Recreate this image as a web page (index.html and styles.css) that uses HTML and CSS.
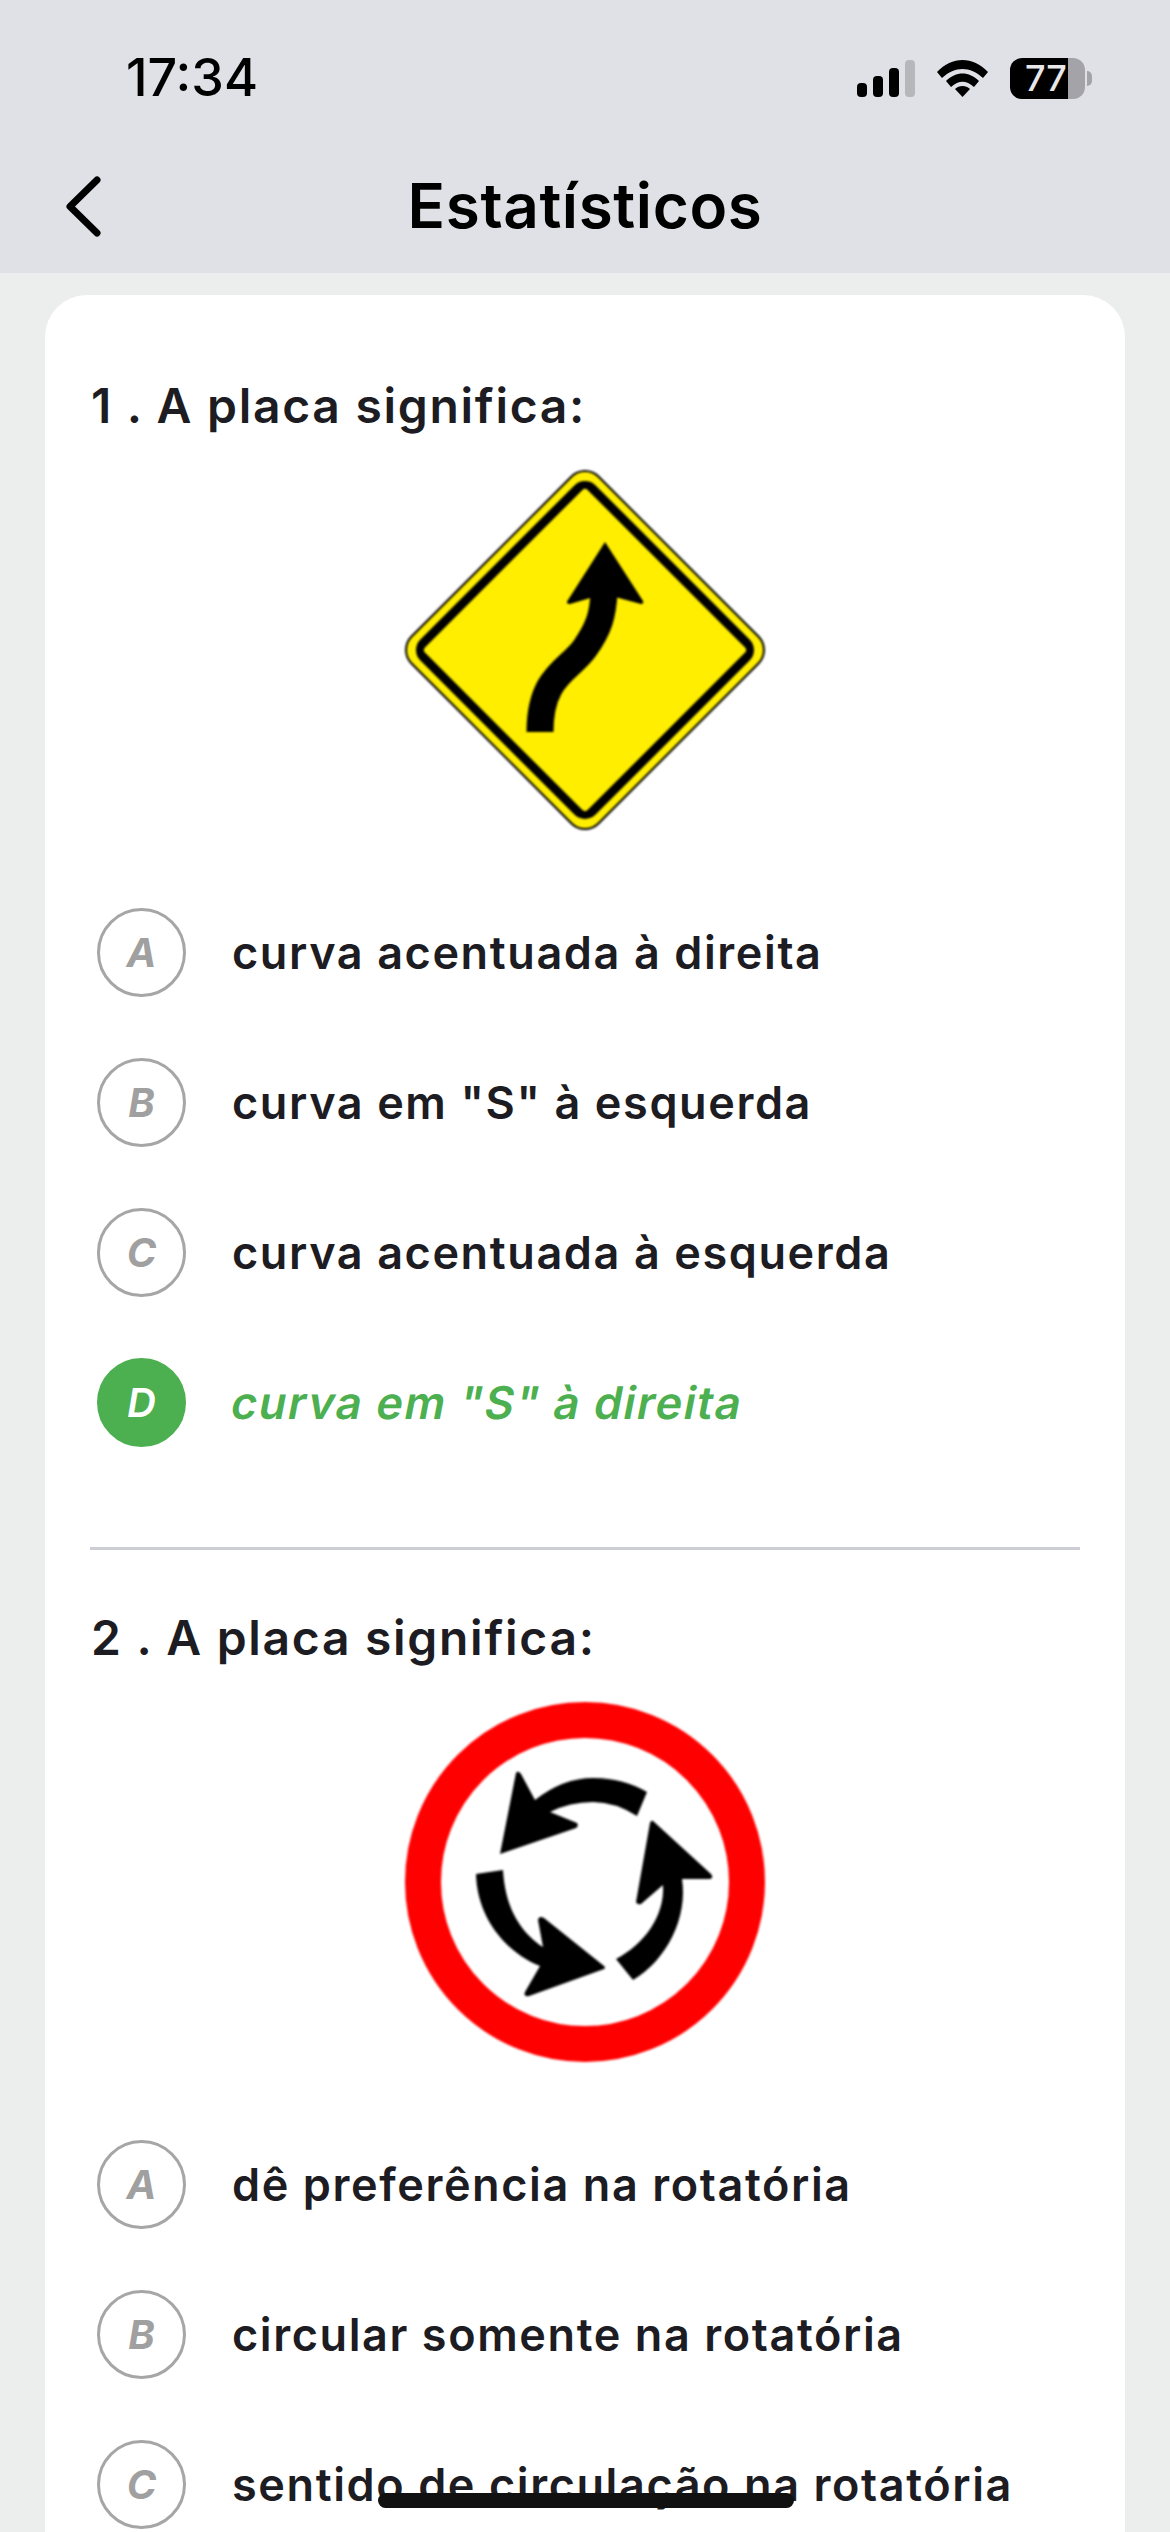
FILE: index.html
```html
<!DOCTYPE html>
<html lang="pt-BR">
<head>
    <meta charset="UTF-8">
    <meta name="viewport" content="width=device-width, initial-scale=1.0">
    <title>Estatísticos</title>
    <link rel="stylesheet" href="styles.css">
</head>
<body>
    <header class="top">
        <div class="status">
            <span class="time">17:34</span>
            <div class="status-icons">
                <svg class="signal" width="58" height="37" viewBox="0 0 58 37">
                    <rect x="0" y="23" width="10" height="14" rx="4" fill="#000"/>
                    <rect x="16" y="16" width="10" height="21" rx="4" fill="#000"/>
                    <rect x="32" y="8" width="10" height="29" rx="4" fill="#000"/>
                    <rect x="48" y="0" width="10" height="37" rx="4" fill="#b6b6bb"/>
                </svg>
                <svg class="wifi" width="51" height="37" viewBox="0 0 51 37">
                    <path d="M0 12 C15 -4 36 -4 51 12 L46 18 C33 6 18 6 5 18 Z" fill="#000"/>
                    <path d="M9 21 C19 11 32 11 42 21 L37 27 C29 20 22 20 14 27 Z" fill="#000"/>
                    <path d="M18 29 C22 25 29 25 33 29 L25.500 37 Z" fill="#000"/>
                </svg>
                <div class="battery">77</div>
            </div>
        </div>
        <div class="nav">
            <svg class="back" width="37" height="61" viewBox="0 0 37 61">
                <path d="M32 4 L5 30.500 L32 57" fill="none" stroke="#000" stroke-width="7" stroke-linecap="round" stroke-linejoin="round"/>
            </svg>
            <h1>Estatísticos</h1>
        </div>
    </header>

    <main class="page">
        <section class="card">
            <div class="question">
                <h2>1 . A placa significa:</h2>
                <svg class="sign" width="360" height="360" viewBox="0 0 360 360">
                    <polygon points="180,20 340,180 180,340 20,180" fill="#000" stroke="#000" stroke-width="40" stroke-linejoin="round"/>
                    <polygon points="180,20 340,180 180,340 20,180" fill="#ffee00" stroke="#ffee00" stroke-width="36" stroke-linejoin="round"/>
                    <polygon points="180,26 334,180 180,334 26,180" fill="#000" stroke="#000" stroke-width="30" stroke-linejoin="round"/>
                    <polygon points="180,23 337,180 180,337 23,180" fill="#ffee00" stroke="#ffee00" stroke-width="8" stroke-linejoin="round"/>
                    <path d="M135 262 C135 205 165 200 180 178 C194 158 198 145 199 122" fill="none" stroke="#000" stroke-width="27"/>
                    <path d="M200 72 L238 131 Q239 134 236 134 L199 124 L165 134 Q160 134 163 130 Z" fill="#000"/>
                </svg>
                <ul class="options">
                    <li class="option"><span class="letter">A</span><span class="label">curva acentuada à direita</span></li>
                    <li class="option"><span class="letter">B</span><span class="label">curva em "S" à esquerda</span></li>
                    <li class="option"><span class="letter">C</span><span class="label">curva acentuada à esquerda</span></li>
                    <li class="option correct"><span class="letter">D</span><span class="label">curva em "S" à direita</span></li>
                </ul>
            </div>
            <div class="question">
                <h2>2 . A placa significa:</h2>
                <svg class="sign" width="360" height="360" viewBox="0 0 360 360">
                    <circle cx="180" cy="180" r="162" fill="#fff" stroke="#ff0000" stroke-width="36"/>
                    <path d="M95 152 L111 71 Q113 68 116 72 L130 98 Q158 76 188 76 Q218 76 242 90 L232 114 Q210 100 188 100 Q165 100 145 110 L172 121 Q174 124 171 126 Z" fill="#000"/>
                    <path d="M248 119 L306 172 Q309 176 305 177 L277 177 C283 215 262 258 228 278 L211 257 C238 243 260 215 258 183 L236 202 Q232 203 231 200 L245 121 Q246 118 248 119 Z" fill="#000"/>
                    <path d="M199 267 L124 294 Q118 295 120 290 L135 264 C100 250 72 215 71 172 L98 168 C100 205 115 230 138 245 L133 218 Q134 213 139 216 L199 264 Q201 266 199 267 Z" fill="#000"/>
                </svg>
                <ul class="options">
                    <li class="option"><span class="letter">A</span><span class="label">dê preferência na rotatória</span></li>
                    <li class="option"><span class="letter">B</span><span class="label">circular somente na rotatória</span></li>
                    <li class="option"><span class="letter">C</span><span class="label">sentido de circulação na rotatória</span></li>
                </ul>
            </div>
        </section>
    </main>

    <div class="home-bar"></div>
</body>
</html>
```

FILE: styles.css
```css
* { box-sizing: border-box; }
html, body { margin: 0; padding: 0; height: 2532px; overflow: hidden; }
body { position: relative; width: 1170px; background: #eceeed; font-family: Inter, "Liberation Sans", sans-serif; color: #1c1c22; }

.top { height: 273px; background: #e0e1e6; color: #000; }
.status { display: flex; justify-content: space-between; align-items: center; height: 156px; padding: 0 85px 0 126px; }
.time { font-size: 52px; font-weight: 500; line-height: 60px; }
.status-icons { display: flex; align-items: center; gap: 22px; }
.battery { position: relative; width: 75px; height: 41px; border-radius: 12px; background: linear-gradient(to right, #000 58px, #a3a3a8 58px); color: #e8e8ea; font-size: 36px; font-weight: 500; line-height: 41px; padding-left: 15px; }
.battery::after { content: ""; position: absolute; right: -7px; top: 13px; width: 5px; height: 15px; border-radius: 0 8px 8px 0; background: #a3a3a8; }

.nav { position: relative; display: flex; justify-content: center; align-items: center; height: 100px; }
.nav h1 { margin: 0; font-size: 62px; font-weight: 600; line-height: 70px; letter-spacing: 0.6px; }
.back { position: absolute; left: 65px; top: 20px; }

.page { height: 2259px; overflow: hidden; padding: 22px 45px 0; }
.card { background: #fff; border-radius: 42px; padding: 81px 45px 0; }

.question { border-bottom: 3px solid #cdcdd4; padding-bottom: 70px; margin-bottom: 58px; }
.question:last-child { border-bottom: 0; }
.question h2 { margin: 0 0 0 1px; font-size: 48px; font-weight: 600; line-height: 60px; letter-spacing: 1.7px; }
.sign { display: block; margin: 34px auto 47px; filter: blur(0.8px); }

.options { list-style: none; margin: 0; padding: 0; }
.option { display: flex; align-items: center; gap: 46px; height: 150px; padding-left: 7px; font-size: 45px; font-weight: 600; letter-spacing: 1.6px; white-space: nowrap; }
.letter { display: flex; align-items: center; justify-content: center; flex: none; width: 89px; height: 89px; border: 3px solid #a6a6a6; border-radius: 50%; color: #a0a0a0; font-size: 40px; font-style: italic; font-weight: 700; letter-spacing: 0; }
.correct { color: #4caf50; }
.correct .label { display: inline-block; transform: skewX(-11deg); }
.correct .letter { background: #4caf50; border-color: #4caf50; color: #fff; font-weight: 600; }

.home-bar { position: absolute; left: 378px; top: 2493px; width: 416px; height: 15px; border-radius: 8px; background: #111; }
```
